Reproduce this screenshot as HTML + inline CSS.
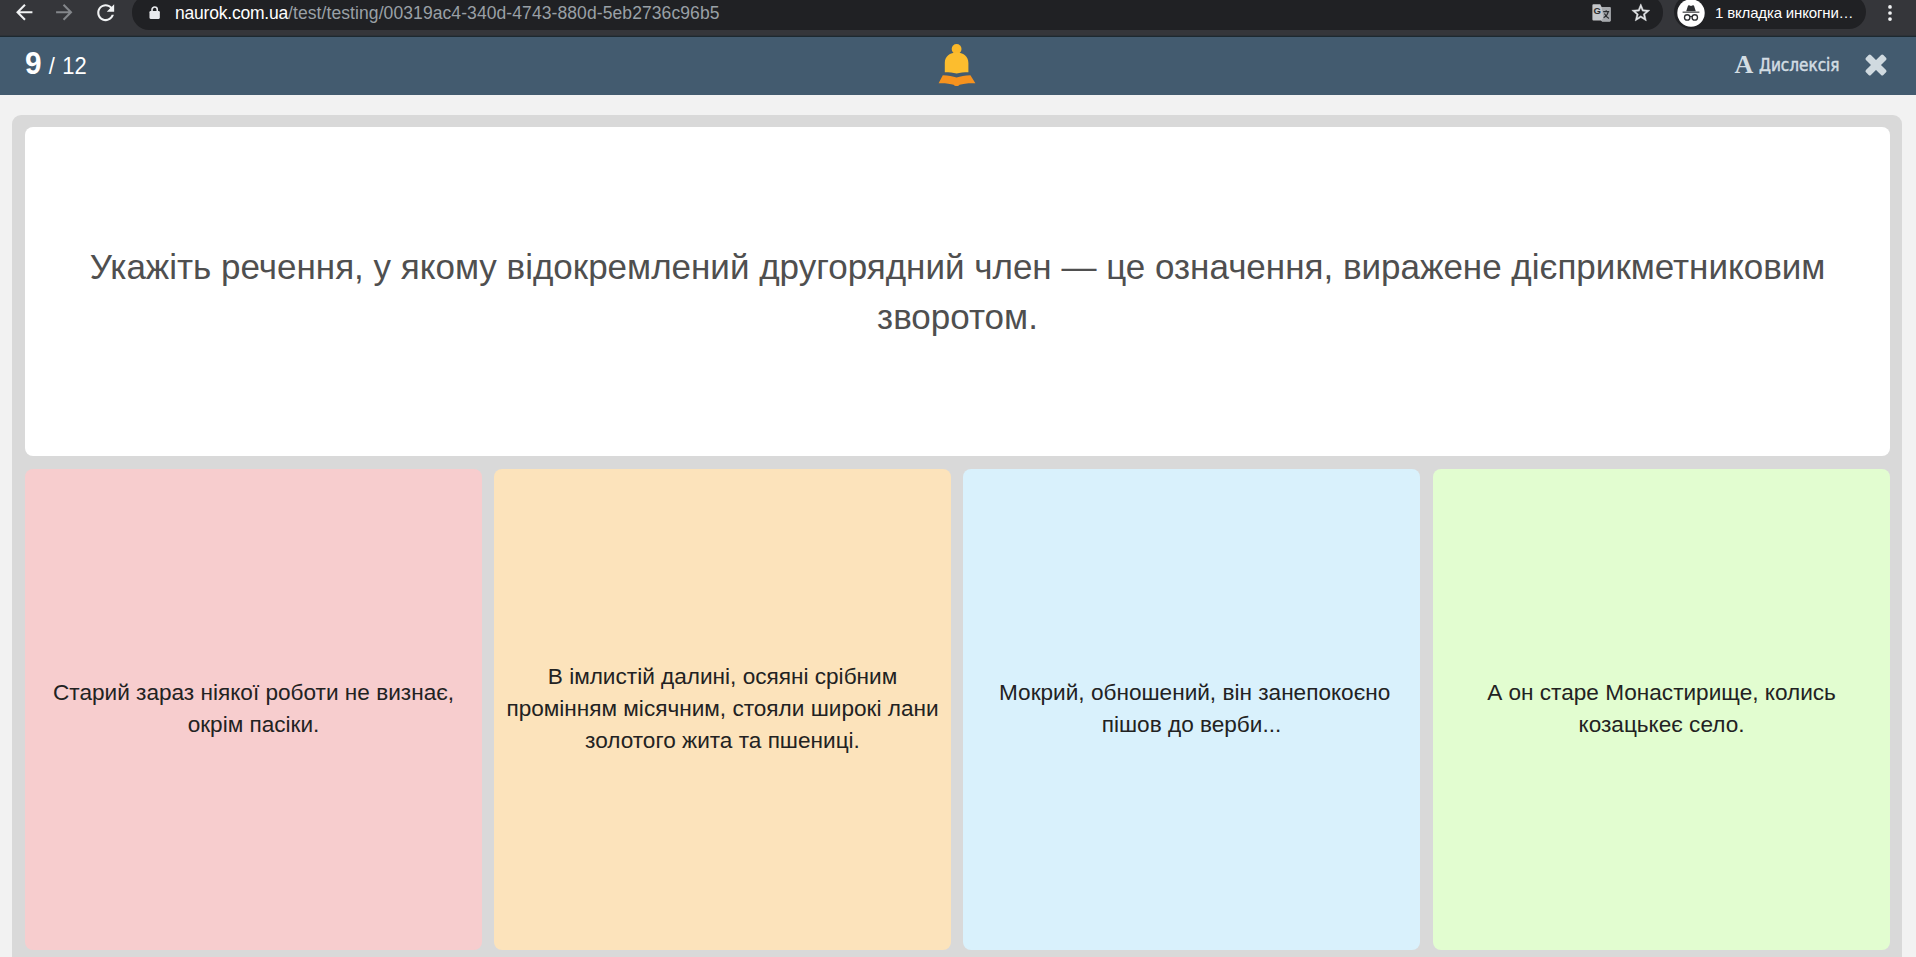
<!DOCTYPE html>
<html lang="uk">
<head>
<meta charset="utf-8">
<title>Тест</title>
<style>
*{box-sizing:border-box;margin:0;padding:0}
html,body{width:1916px;height:957px;overflow:hidden;background:#f2f2f2;font-family:"Liberation Sans",sans-serif}
#chrome{position:absolute;left:0;top:0;width:1916px;height:37px;background:#35363a;border-bottom:1.5px solid #1d2930;box-shadow:inset 0 -1px 0 #2d3136}
#omni{position:absolute;left:131.5px;top:-4.6px;width:1531.8px;height:34.2px;border-radius:17px;background:#202124}
#url{position:absolute;left:175px;top:2.3px;font-size:17.5px;line-height:22px;color:#9aa0a6;white-space:nowrap;letter-spacing:0.087px}
#url b{font-weight:normal;color:#fff;letter-spacing:-0.21px}
#incog{position:absolute;left:1674px;top:-4.6px;width:191.5px;height:33.4px;border-radius:17px;background:#202124}
#incog span{position:absolute;left:41px;top:6.4px;font-size:15px;letter-spacing:-0.16px;line-height:22px;color:#fff;white-space:nowrap}
#bar{position:absolute;left:0;top:37px;width:1916px;height:58px;background:#435b6f}
#cnt{position:absolute;left:25.3px;top:42.9px;color:#fff;white-space:nowrap;line-height:40px;font-size:23.6px;transform:scaleX(.93);transform-origin:0 50%;word-spacing:1.3px}
#cnt b{font-size:32px}
#dysA{position:absolute;left:1734.5px;top:48.4px;color:#d3dde3;font-family:"Liberation Serif",serif;font-weight:bold;font-size:26px;line-height:34px;white-space:nowrap}
#dys{position:absolute;left:1758.7px;top:51.9px;color:#d3dde3;white-space:nowrap;font-family:"DejaVu Sans Condensed","DejaVu Sans",sans-serif;font-size:17.5px;line-height:26px;-webkit-text-stroke:0.5px #d3dde3;transform:scaleX(.97);transform-origin:0 50%}
#wrap{position:absolute;left:12px;top:115px;width:1890px;height:860px;background:#d9d9d9;border-radius:9px}
#q{position:absolute;left:25px;top:127px;width:1865px;height:329px;background:#fff;border-radius:8px;display:flex;align-items:center;justify-content:center;text-align:center;color:#4f4f4f;font-size:35px;line-height:50px;padding:0 20px}
.a{position:absolute;top:469px;height:481px;width:457px;border-radius:8px;display:flex;align-items:center;justify-content:center;text-align:center;color:#222;font-size:22.6px;line-height:32px;padding:0 8px 1px}
#a1{left:25px;background:#f7cdce}
#a2{left:494px;background:#fce3bb}
#a3{left:963px;background:#d9f1fc}
#a4{left:1433px;background:#e2fdd0}
svg{position:absolute;overflow:visible}
</style>
</head>
<body>
<div id="chrome">
  <div id="omni"></div>
  <svg id="i-back" width="24.5" height="24.5" viewBox="0 0 24 24" style="left:12.2px;top:0.2px"><path fill="#f1f3f4" d="M20 11H7.83l5.59-5.59L12 4l-8 8 8 8 1.41-1.41L7.83 13H20v-2z"/></svg>
  <svg id="i-fwd" width="24.5" height="24.5" viewBox="0 0 24 24" style="left:52px;top:0.2px"><path fill="#84878b" d="M4 11h12.17l-5.59-5.59L12 4l8 8-8 8-1.41-1.41L16.17 13H4v-2z"/></svg>
  <svg id="i-rel" width="25.4" height="25.4" viewBox="0 0 24 24" style="left:92.5px;top:0px"><path fill="#f1f3f4" d="M17.65 6.35C16.2 4.9 14.21 4 12 4c-4.42 0-7.99 3.58-7.99 8s3.57 8 7.99 8c3.73 0 6.84-2.55 7.73-6h-2.08c-.82 2.33-3.04 4-5.65 4-3.31 0-6-2.69-6-6s2.69-6 6-6c1.66 0 3.14.69 4.22 1.78L13 11h7V4l-2.35 2.35z"/></svg>
  <svg id="i-lock" width="11.3" height="13.2" viewBox="0 0 12 14" style="left:148.8px;top:6.2px"><rect x="0.5" y="5.4" width="11" height="8.4" rx="1.2" fill="#e8eaed"/><path d="M3.2 6V3.9a2.8 2.8 0 0 1 5.6 0V6" fill="none" stroke="#e8eaed" stroke-width="1.7"/></svg>
  <div id="url"><b>naurok.com.ua</b>/test/testing/00319ac4-340d-4743-880d-5eb2736c96b5</div>
  <svg id="i-tr" width="19" height="18" viewBox="0 0 19 18" style="left:1591.8px;top:3.6px"><path d="M1.4 0.3H8.2L9.6 3H17.6Q18.6 3 18.6 4V16.6Q18.6 17.6 17.6 17.6H10.2L8.9 16.6H1.4Q0.4 16.6 0.4 15.6V1.3Q0.4 0.3 1.4 0.3z" fill="#c5c7ca"/><path d="M9.6 3H17.6Q18.6 3 18.6 4V16.6Q18.6 17.6 17.6 17.6H10.2L8.9 16.6L11.4 14z" fill="#a6a9ad"/><text x="1.6" y="10" style="font-family:'Liberation Sans',sans-serif;font-size:9.5px;font-weight:bold" fill="#2b2d30">G</text><path d="M11.2 7.6h6M14.2 6.2v1.4M16.2 7.8c-.6 2.6-2.2 4.6-4.6 6M12.4 9.6c.9 1.9 2.4 3.6 4.6 4.8" fill="none" stroke="#2b2d30" stroke-width="1.15"/></svg>
  <svg id="i-star" width="21.6" height="21.6" viewBox="0 0 24 24" style="left:1629.9px;top:1.9px"><path fill="#e2e4e7" stroke="#e2e4e7" stroke-width="0.5" d="M22 9.24l-7.19-.62L12 2 9.19 8.63 2 9.24l5.46 4.73L5.82 21 12 17.27 18.18 21l-1.63-7.03L22 9.24zM12 15.4l-3.76 2.27 1-4.28-3.32-2.88 4.38-.38L12 6.1l1.71 4.04 4.38.38-3.32 2.88 1 4.28L12 15.4z"/></svg>
  <div id="incog"><span>1 вкладка инкогни…</span></div>
  <svg id="i-inc" width="28" height="28" viewBox="0 0 28 28" style="left:1676.8px;top:-1.3px"><circle cx="14" cy="14" r="13.7" fill="#fff"/><path d="M9.2 12.2l1.7-5.3c.2-.6.7-.8 1.2-.6l1.9.6 1.9-.6c.5-.2 1 0 1.2.6l1.7 5.3z" fill="#2e3033"/><rect x="5.6" y="12.6" width="16.8" height="1.1" fill="#2e3033"/><circle cx="10.2" cy="18.4" r="2.7" fill="none" stroke="#2e3033" stroke-width="1.35"/><circle cx="17.8" cy="18.4" r="2.7" fill="none" stroke="#2e3033" stroke-width="1.35"/><path d="M12.7 17.8q1.3-.8 2.6 0" fill="none" stroke="#2e3033" stroke-width="1.2"/></svg>
  <svg id="i-menu" width="6" height="18" viewBox="0 0 6 18" style="left:1886.8px;top:3.8px"><circle cx="3" cy="2.9" r="1.85" fill="#f1f3f4"/><circle cx="3" cy="9" r="1.85" fill="#f1f3f4"/><circle cx="3" cy="15.1" r="1.85" fill="#f1f3f4"/></svg>
</div>
<div id="bar"></div>
<div id="cnt"><b>9</b> / 12</div>
<svg id="logo" width="40" height="46" viewBox="0 0 40 46" style="left:937px;top:42px">
  <circle cx="19.6" cy="7" r="4.9" fill="#fbb829"/>
  <path d="M7.8 30.3V21C7.8 14.4 13 10.6 19.6 10.6S31.4 14.4 31.4 21V30.3C27 30.3 23 30.7 19.6 31.5C16.2 30.7 12.2 30.3 7.8 30.3z" fill="#fcbd2e"/>
  <path d="M5.8 33.2C11 33.4 16 34 19.6 35.6C23.2 34 28.2 33.4 33.4 33.2L38.4 41.2C32 41 26 41.4 22.6 42.8C21.8 44.4 17.4 44.4 16.6 42.8C13.2 41.4 7.2 41 1.6 41.2z" fill="#f6921e"/>
</svg>
<div id="dysA">A</div><div id="dys">Дислексія</div>
<svg id="i-x" width="24" height="24" viewBox="0 0 24 24" style="left:1864.2px;top:53.1px"><g fill="#d0dae0" transform="rotate(45 12 12)"><rect x="-0.3" y="8.5" width="24.6" height="7" rx="1.6"/><rect x="8.5" y="-0.3" width="7" height="24.6" rx="1.6"/></g></svg>
<div id="wrap"></div>
<div id="q"><div>Укажіть речення, у якому відокремлений другорядний член — це означення, виражене дієприкметниковим зворотом.</div></div>
<div class="a" id="a1"><div>Старий зараз ніякої роботи не визнає, окрім пасіки.</div></div>
<div class="a" id="a2"><div>В імлистій далині, осяяні срібним промінням місячним, стояли широкі лани золотого жита та пшениці.</div></div>
<div class="a" id="a3"><div>&nbsp;Мокрий, обношений, він занепокоєно пішов до верби...</div></div>
<div class="a" id="a4"><div>А он старе Монастирище, колись козацькеє село.</div></div>
</body>
</html>
